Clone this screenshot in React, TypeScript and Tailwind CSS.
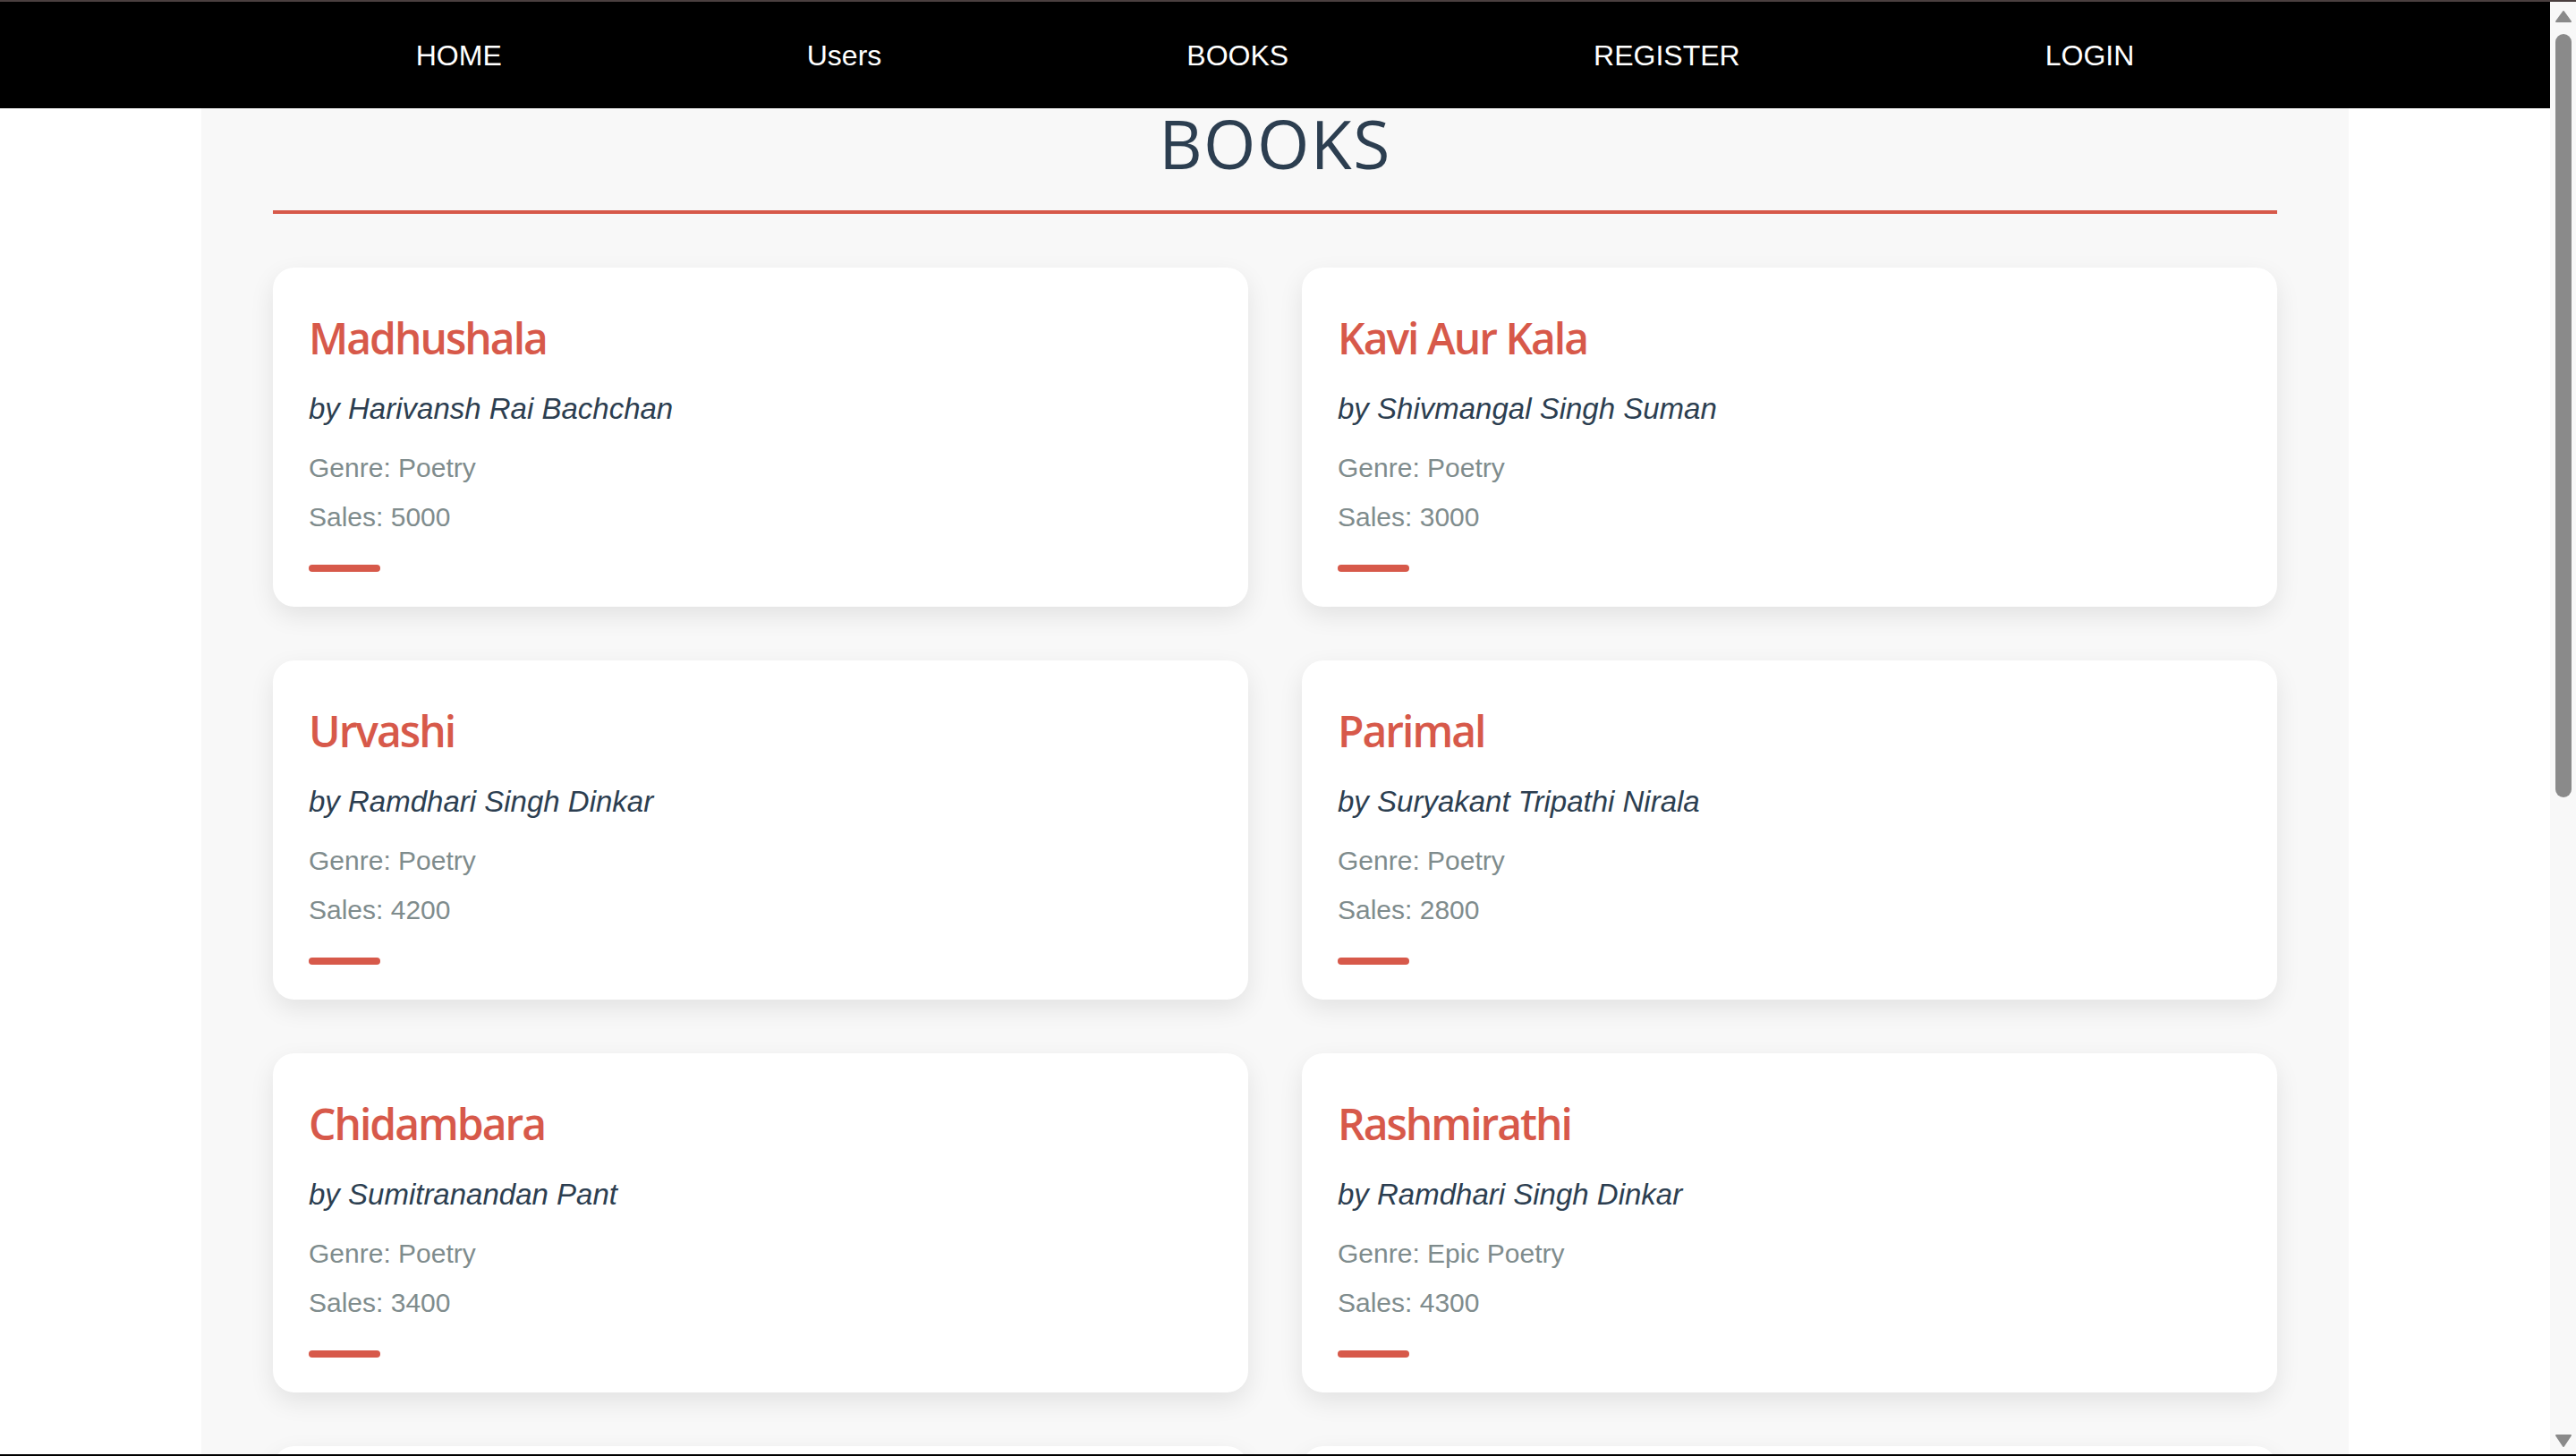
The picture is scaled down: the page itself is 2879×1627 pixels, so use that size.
import React from "react";

const books = [
  { title: "Madhushala", author: "Harivansh Rai Bachchan", genre: "Poetry", sales: 5000 },
  { title: "Kavi Aur Kala", author: "Shivmangal Singh Suman", genre: "Poetry", sales: 3000 },
  { title: "Urvashi", author: "Ramdhari Singh Dinkar", genre: "Poetry", sales: 4200 },
  { title: "Parimal", author: "Suryakant Tripathi Nirala", genre: "Poetry", sales: 2800 },
  { title: "Chidambara", author: "Sumitranandan Pant", genre: "Poetry", sales: 3400 },
  { title: "Rashmirathi", author: "Ramdhari Singh Dinkar", genre: "Epic Poetry", sales: 4300 },
  { title: "Kamayani", author: "Jaishankar Prasad", genre: "Epic Poetry", sales: 3900 },
  { title: "Yama", author: "Mahadevi Varma", genre: "Poetry", sales: 2500 },
];

const links = ["HOME", "Users", "BOOKS", "REGISTER", "LOGIN"];

function BookCard({ book }: { book: (typeof books)[number] }) {
  return (
    <div className="rounded-[24px] bg-white px-[40px] pt-[50px] pb-[39px] shadow-[0_10px_28px_rgba(0,0,0,0.09)]">
      <h3 className="font-['Open_Sans',sans-serif] text-[48px] leading-[58px] font-semibold tracking-[-2px] text-[#d7594a]">
        {book.title}
      </h3>
      <p className="mt-[30px] font-['Liberation_Sans',Arial,sans-serif] text-[33px] leading-[40px] italic text-[#2c3e50]">
        by {book.author}
      </p>
      <p className="mt-[26px] font-['Liberation_Sans',Arial,sans-serif] text-[30px] leading-[40px] text-[#7f8c8d]">
        Genre: {book.genre}
      </p>
      <p className="mt-[15px] font-['Liberation_Sans',Arial,sans-serif] text-[30px] leading-[40px] text-[#7f8c8d]">
        Sales: {book.sales}
      </p>
      <div className="mt-[33px] h-[8px] w-[80px] rounded-full bg-[#d7594a]" />
    </div>
  );
}

function Scrollbar() {
  return (
    <div className="flex w-[29px] flex-col items-center bg-[#f8f8f8] pt-[10px] pb-[8px]">
      <svg width="18" height="13" viewBox="0 0 18 13">
        <path d="M9 1 L17 12 L1 12 Z" fill="#8a8a8a" stroke="#8a8a8a" strokeLinejoin="round" strokeWidth="2" />
      </svg>
      <div className="mt-[13px] h-[853px] w-[18px] rounded-full bg-[#8a8a8a]" />
      <div className="flex-1" />
      <svg width="18" height="14" viewBox="0 0 18 14">
        <path d="M1 1 L17 1 L9 13 Z" fill="#8a8a8a" stroke="#8a8a8a" strokeLinejoin="round" strokeWidth="2" />
      </svg>
    </div>
  );
}

export default function App() {
  return (
    <div className="flex h-[1627px] w-full flex-col overflow-hidden bg-white">
      <div className="h-[2px] bg-[#4a3f3f]" />

      <div className="flex min-h-0 flex-1">
        <div className="flex min-w-0 flex-1 flex-col overflow-hidden">
          {/* Navbar */}
          <nav className="flex h-[119px] shrink-0 items-center justify-center gap-[341px] bg-black">
            {links.map((link) => (
              <a
                key={link}
                href="#"
                className="font-['Liberation_Sans',Arial,sans-serif] text-[32px] text-white"
              >
                {link}
              </a>
            ))}
          </nav>

          {/* Books */}
          <div className="mx-auto w-[2400px] flex-1 bg-[#f8f8f8] px-[80px]">
            <h2 className="border-b-4 border-[#d7594a] pb-[36px] text-center font-['Open_Sans',sans-serif] text-[75px] leading-[78px] tracking-[1.5px] text-[#2c3e50]">
              BOOKS
            </h2>

            <div className="mt-[60px] grid grid-cols-2 gap-[60px]">
              {books.map((book) => (
                <BookCard key={book.title} book={book} />
              ))}
            </div>
          </div>
        </div>

        <Scrollbar />
      </div>

      <div className="h-[2px] bg-black" />
    </div>
  );
}
